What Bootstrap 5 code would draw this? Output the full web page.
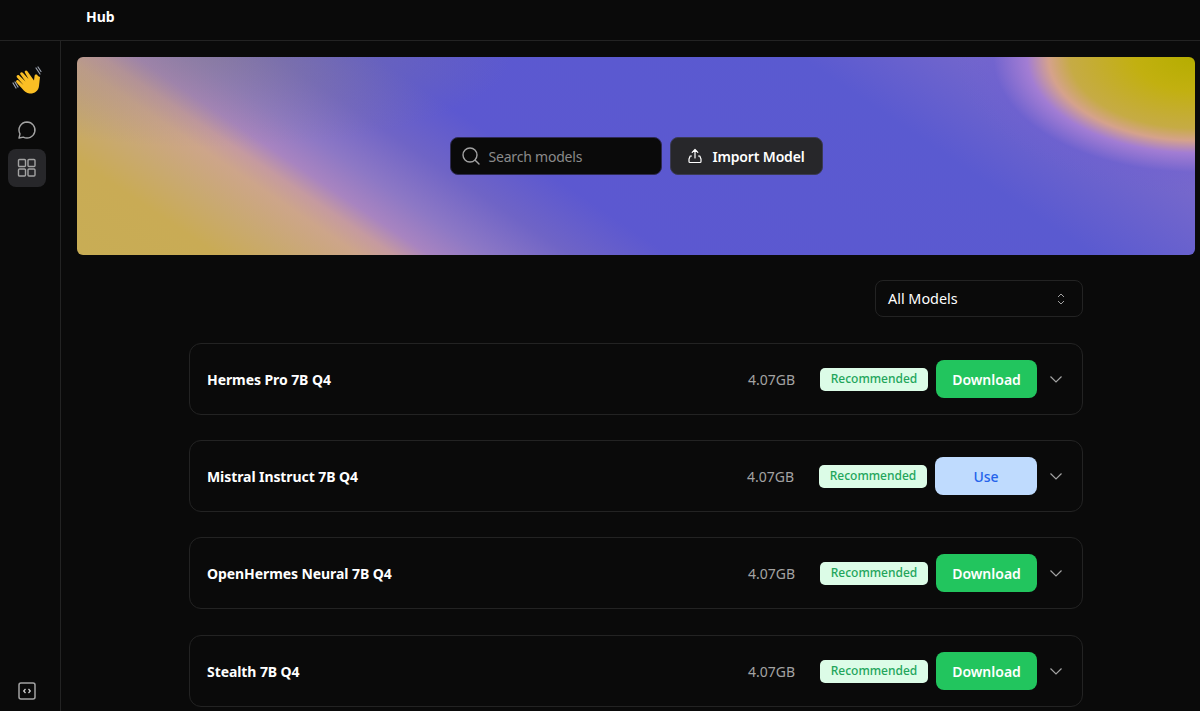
<!DOCTYPE html>
<html lang="en">
<head>
    <meta charset="UTF-8">
    <title>Hub</title>
    <link rel="stylesheet" href="https://cdn.jsdelivr.net/npm/bootstrap@5.3.0/dist/css/bootstrap.min.css">
    <style>
        html, body { height: 100%; overflow: hidden; }
        body { background: #0a0a0a; color: #fff; font-family: "Noto Sans", "Open Sans", sans-serif; }
        .top-strip { height: 41px; border-bottom: 1px solid #232323; padding-left: 86px; font-size: 14px; font-weight: 700; line-height: 34px; }
        .app-body { height: 670px; }
        .side-rail { width: 61px; flex: none; border-right: 1px solid #232323; padding: 24px 7px 1px 0; }
        .rail-btn { width: 38px; height: 38px; border-radius: 8px; color: #a3a3a3; }
        .rail-btn.is-active { background: #27272a; }
        .hand-icon { margin-bottom: 16px; }
        .main-pane { padding: 16px 5px 0 16px; min-width: 0; }
        .hero-banner { height: 198px; border-radius: 6px;
            background:
                radial-gradient(ellipse 240px 137px at 100% 0%, #b5ad00 0%, #c2b010 25%, #c6ab45 52%, #d5a28c 61%, rgba(167,127,212,.9) 70%, rgba(110,95,210,.4) 84%, rgba(100,90,210,0) 100%),
                radial-gradient(ellipse 300px 90px at 12% 0%, rgba(140,130,130,.5), rgba(140,130,130,0)),
                linear-gradient(34deg, #c8ad55 0%, #c9ab55 10%, #c9a970 15%, #cda58a 20%, #c59aa0 22.5%, #a884c0 25%, #8d78c5 29%, #6f64c6 35%, #5c58d0 42%, #5a5ad0 72%, #7a6acb 88%); }
        .search-box { width: 212px; height: 38px; background: #0a0a0a; border: 1px solid #2e2a55; border-radius: 8px; padding-left: 10px; color: #8a8a8a; font-size: 14px; letter-spacing: -.2px; }
        .import-btn { height: 38px; width: 153px; background: #27272a; border: 1px solid #3a3a55; border-radius: 8px; color: #fff; font-size: 14px; font-weight: 600; letter-spacing: -.15px; }
        .import-btn:hover { background: #27272a; color: #fff; }
        .import-icon { margin-right: 9px; }
        .model-col { width: 894px; margin-left: 112px; }
        .model-filter { width: 208px; height: 37px; margin: 25px 0 26px auto; padding: 0 17px 0 12px; border: 1px solid #232323; border-radius: 8px; font-size: 14.4px; }
        .model-row { height: 72px; border: 1px solid #232323; border-radius: 12px; padding: 0 19px 0 17px; margin-bottom: 25px; }
        .model-row:nth-child(4) { margin-bottom: 26px; }
        .model-name { font-size: 14px; font-weight: 700; letter-spacing: -.08px; }
        .model-size { font-size: 14px; color: #a3a3a3; margin-right: 25px; }
        .rec-tag { height: 23px; width: 108px; border-radius: 5px; background: #dcfce7; color: #22a55b; font-size: 12px; font-weight: 500; margin-right: 8px; }
        .act-btn { height: 38px; width: 101px; border: 0; border-radius: 8px; font-size: 14px; font-weight: 500; padding: 0; }
        .act-download, .act-download:hover { background: #22c55e; color: #fff; font-weight: 600; }
        .act-use, .act-use:hover { background: #bfdbfe; color: #2563eb; width: 102px; }
        .row-caret { margin-left: 12px; color: #a3a3a3; }
    </style>
</head>
<body>

<div class="top-strip">Hub</div>

<div class="app-body d-flex">
    <div class="side-rail d-flex flex-column align-items-center">
        <svg class="hand-icon" width="30" height="30" viewBox="0 0 30 30" fill="none">
            <path d="M1 18l3 5M3 17l3 5" stroke="#9ca3af" stroke-width="1.200" stroke-linecap="round"/>
            <path d="M24 3l4 6M26 2l3 4.500" stroke="#9ca3af" stroke-width="1.200" stroke-linecap="round"/>
            <path d="M28 12l-1 9c-.5 5-5 8-9.500 7.500-3-.4-5-2-7-4.500l-6-6.500c-1.300-1.500.6-3.200 2-2l5 4.500-6.500-7.500c-1.300-1.600.8-3.300 2.200-2l6.300 6-5-7c-1.200-1.700 1-3.200 2.300-1.800l5.700 6.300-3.500-6.300c-1-1.800 1.300-3 2.400-1.400l6.600 9.200.6-4.800c.3-1.900 3.200-1.600 3.300.300z" fill="#fbbf24"/>
        </svg>
        <div class="rail-btn d-flex align-items-center justify-content-center">
            <svg width="20" height="20" viewBox="0 0 20 20" fill="none" stroke="currentColor" stroke-width="1.400" stroke-linejoin="round"><path d="M10 2a8 8 0 1 1-3.700 15.100L2 18l1-4.200A8 8 0 0 1 10 2z"/></svg>
        </div>
        <div class="rail-btn is-active d-flex align-items-center justify-content-center">
            <svg width="20" height="20" viewBox="0 0 20 20" fill="none" stroke="currentColor" stroke-width="1.400"><rect x="1.500" y="1.500" width="7" height="7" rx="1"/><rect x="11" y="1.500" width="7" height="7" rx="1"/><rect x="1.500" y="11" width="7" height="7" rx="1"/><rect x="11" y="11" width="7" height="7" rx="1"/></svg>
        </div>
        <div class="mt-auto rail-btn d-flex align-items-center justify-content-center">
            <svg width="18" height="18" viewBox="0 0 18 18" fill="none" stroke="currentColor" stroke-width="1.500"><rect x="1" y="1" width="16" height="16" rx="2"/><path d="M7.500 7L5.700 9l1.800 2M10.500 7l1.800 2-1.800 2" stroke="#d4d4d4" stroke-width="1.200"/></svg>
        </div>
    </div>

    <div class="main-pane flex-grow-1">
        <div class="hero-banner d-flex align-items-center justify-content-center gap-2">
            <div class="search-box d-flex align-items-center gap-2">
                <svg width="20" height="20" viewBox="0 0 20 20" fill="none" stroke="#a3a3a3" stroke-width="1.400" stroke-linecap="round"><circle cx="9" cy="9" r="7"/><path d="M14.200 14.200L18 18"/></svg>
                <span>Search models</span>
            </div>
            <button class="btn import-btn d-flex align-items-center justify-content-center p-0">
                <svg class="import-icon" width="16" height="16" viewBox="0 0 16 16" fill="none" stroke="currentColor" stroke-width="1.200" stroke-linecap="round" stroke-linejoin="round"><path d="M8 10V1.500M5.200 4.300L8 1.500l2.800 2.800M4.500 8H3.200L2 11v2.500a1 1 0 0 0 1 1h10a1 1 0 0 0 1-1V11l-1.200-3h-1.300"/></svg>
                Import Model
            </button>
        </div>

        <div class="model-col">
            <div class="model-filter d-flex align-items-center justify-content-between">
                <span>All Models</span>
                <svg width="8" height="12" viewBox="0 0 8 12" fill="none" stroke="#a3a3a3" stroke-width="1"><path d="M1 4l3-3 3 3M1 8l3 3 3-3"/></svg>
            </div>

            <div class="model-row d-flex align-items-center">
                <div class="model-name me-auto">Hermes Pro 7B Q4</div>
                <div class="model-size">4.07GB</div>
                <div class="rec-tag d-flex align-items-center justify-content-center">Recommended</div>
                <button class="btn act-btn act-download">Download</button>
                <svg class="row-caret" width="14" height="14" viewBox="0 0 14 14" fill="none" stroke="currentColor" stroke-width="1.200"><path d="M1.500 4.500L7 10l5.500-5.500"/></svg>
            </div>
            <div class="model-row d-flex align-items-center">
                <div class="model-name me-auto">Mistral Instruct 7B Q4</div>
                <div class="model-size">4.07GB</div>
                <div class="rec-tag d-flex align-items-center justify-content-center">Recommended</div>
                <button class="btn act-btn act-use">Use</button>
                <svg class="row-caret" width="14" height="14" viewBox="0 0 14 14" fill="none" stroke="currentColor" stroke-width="1.200"><path d="M1.500 4.500L7 10l5.500-5.500"/></svg>
            </div>
            <div class="model-row d-flex align-items-center">
                <div class="model-name me-auto">OpenHermes Neural 7B Q4</div>
                <div class="model-size">4.07GB</div>
                <div class="rec-tag d-flex align-items-center justify-content-center">Recommended</div>
                <button class="btn act-btn act-download">Download</button>
                <svg class="row-caret" width="14" height="14" viewBox="0 0 14 14" fill="none" stroke="currentColor" stroke-width="1.200"><path d="M1.500 4.500L7 10l5.500-5.500"/></svg>
            </div>
            <div class="model-row d-flex align-items-center">
                <div class="model-name me-auto">Stealth 7B Q4</div>
                <div class="model-size">4.07GB</div>
                <div class="rec-tag d-flex align-items-center justify-content-center">Recommended</div>
                <button class="btn act-btn act-download">Download</button>
                <svg class="row-caret" width="14" height="14" viewBox="0 0 14 14" fill="none" stroke="currentColor" stroke-width="1.200"><path d="M1.500 4.500L7 10l5.500-5.500"/></svg>
            </div>
        </div>
    </div>
</div>

</body>
</html>
